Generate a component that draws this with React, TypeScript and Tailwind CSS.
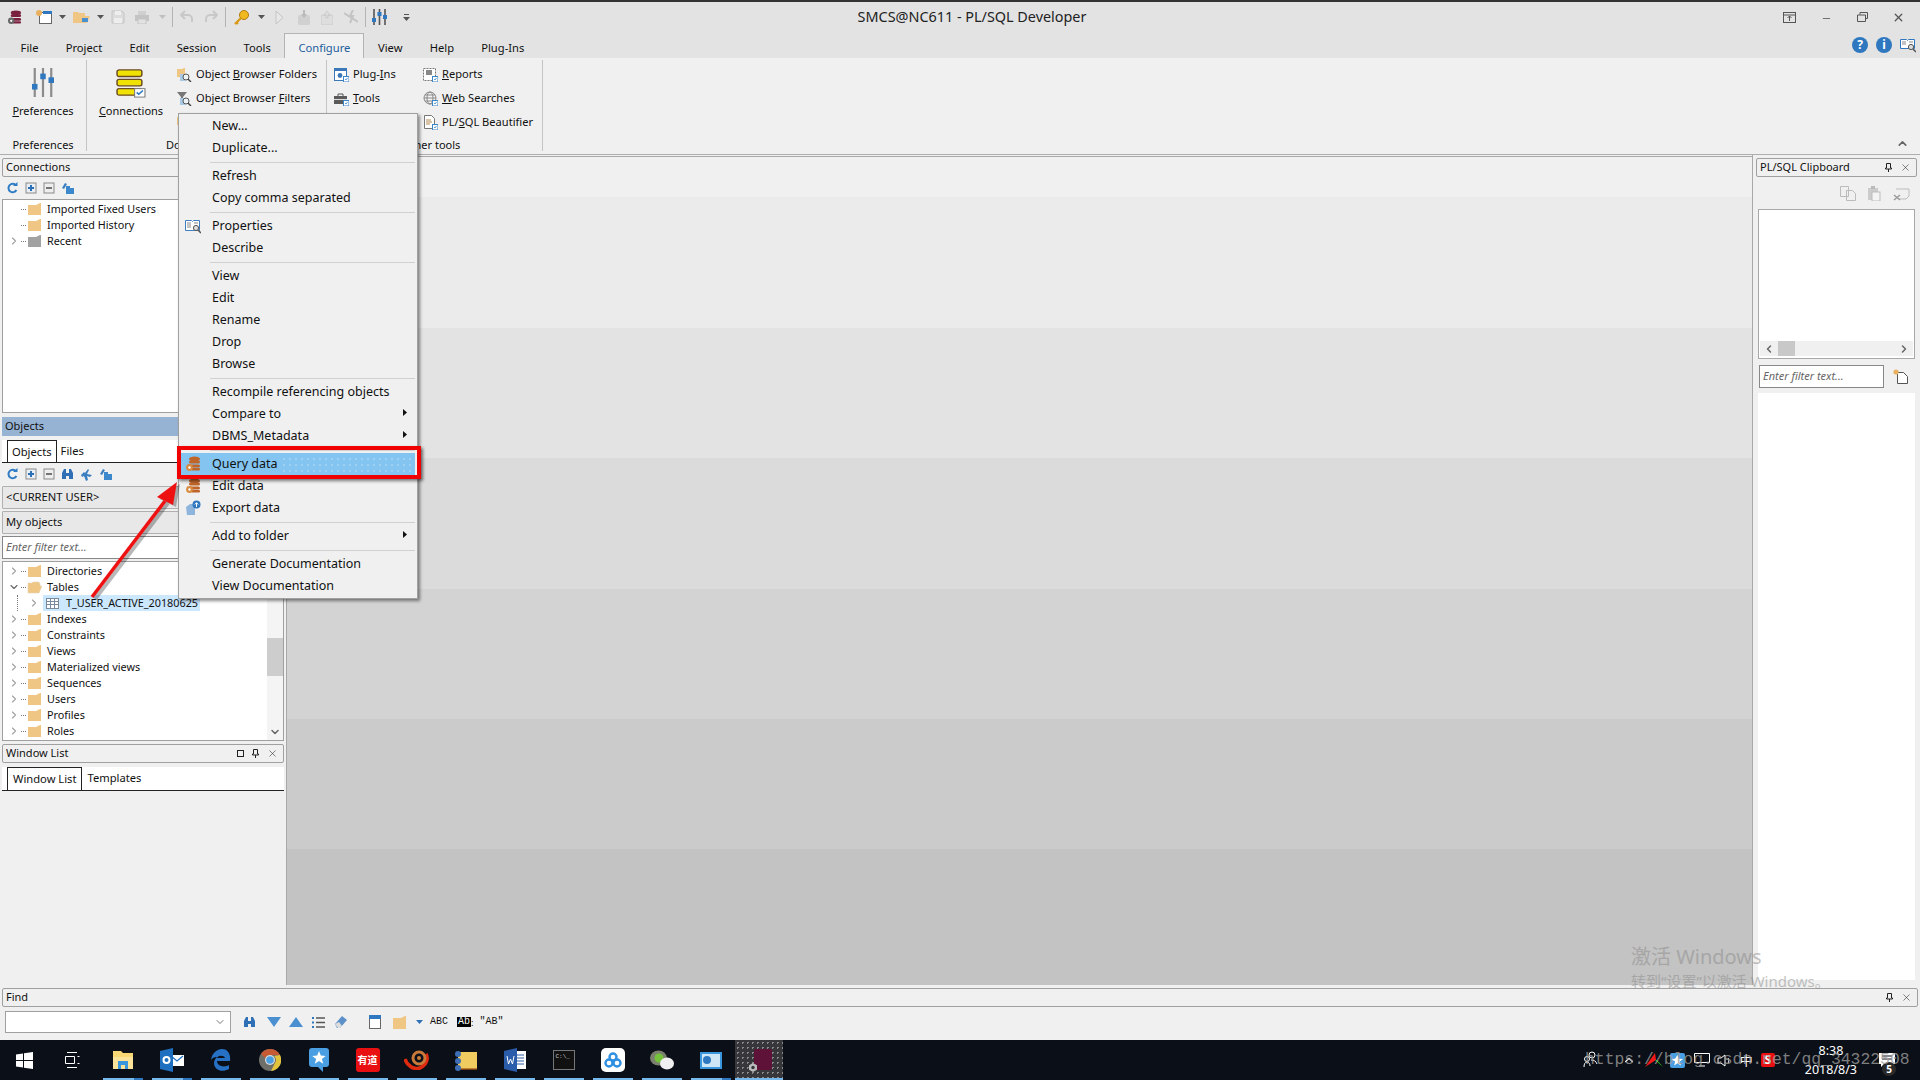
import React from "react";
import { ChevronDown, ChevronRight, ChevronUp, ChevronLeft, Minus, X } from "lucide-react";

const FONT = "font-['Noto_Sans','Noto_Sans_CJK_SC',sans-serif]";

const Folder = ({ color = "#efc683", open = false }: { color?: string; open?: boolean }) => (
  <svg width="15" height="14" viewBox="0 0 15 14" className="shrink-0">
    {open ? (
      <path d="M1 13V3h4l1-1h6l1 2v2h2l-3 7z" fill={color} stroke="#e3d3b8" strokeWidth="0.6" />
    ) : (
      <path d="M1 3h8l4-2h1v12H1z" fill={color} />
    )}
  </svg>
);

const Db = ({ c = "#7b1f3e", gear = "#666", size = 16 }: { c?: string; gear?: string; size?: number }) => (
  <svg width={size} height={size} viewBox="0 0 16 16" className="shrink-0">
    <ellipse cx="9.5" cy="3" rx="5.5" ry="2.5" fill={c} />
    <rect x="4" y="4.5" width="11" height="3" rx="1.5" fill={c} />
    <rect x="4" y="8.5" width="11" height="3" rx="1.5" fill={c} />
    <rect x="6" y="12" width="9" height="2.5" rx="1.2" fill={c} />
    <circle cx="4.5" cy="11.5" r="3.4" fill={gear} />
    <circle cx="4.5" cy="11.5" r="1.2" fill="#fff" />
  </svg>
);

const Caret = ({ c = "#555" }: { c?: string }) => (
  <svg width="7" height="4" viewBox="0 0 7 4" className="shrink-0">
    <path d="M0 0h7L3.5 4z" fill={c} />
  </svg>
);

const Arrowhead = () => (
  <svg width="4" height="7" viewBox="0 0 4 7" className="absolute right-[8px] top-[6px]">
    <path d="M0 0l4 3.5L0 7z" fill="#111" />
  </svg>
);

const Badge = () => (
  <>
    <rect x="9.5" y="9.5" width="5.5" height="5.5" fill="#fff" stroke="#3a86c8" />
    <path d="M11 12l1 1 1.5-2" fill="none" stroke="#3a86c8" strokeWidth="0.8" />
  </>
);

const SmallTools = ({ binoculars = false }: { binoculars?: boolean }) => (
  <div className="flex h-[22px] items-center gap-[6px] pl-[4px]">
    <svg width="12" height="12" viewBox="0 0 12 12" className="shrink-0">
      <path d="M10 3.5A4.2 4.2 0 1 0 10.4 8" fill="none" stroke="#2f7cc4" strokeWidth="2" />
      <path d="M7 4h4.5V0z" fill="#2f7cc4" />
    </svg>
    <svg width="12" height="12" viewBox="0 0 12 12" className="ml-[1px] shrink-0">
      <rect x="1" y="1" width="10" height="10" fill="#e9eef4" stroke="#8a8a8a" />
      <path d="M3 6h6M6 3v6" stroke="#2b6fb5" strokeWidth="2" />
    </svg>
    <svg width="12" height="12" viewBox="0 0 12 12" className="shrink-0">
      <rect x="1" y="1" width="10" height="10" fill="#eee" stroke="#8a8a8a" />
      <path d="M3 6h6" stroke="#555" strokeWidth="1.6" />
    </svg>
    {binoculars && (
      <>
        <svg width="13" height="12" viewBox="0 0 13 12" className="shrink-0">
          <path d="M1 11V5l2-4h2v10zM8 11V1h2l2 4v6zM5 5h3v3H5z" fill="#2f6fb5" />
        </svg>
        <svg width="13" height="13" viewBox="0 0 13 13" className="shrink-0">
          <path d="M1 7l3-3 1 1 3-4 1 1-2 4 5 1-2 2-3-1 1 4-2 1-2-5-2 1z" fill="#3c7fc0" />
        </svg>
      </>
    )}
    <svg width="13" height="12" viewBox="0 0 13 12" className="shrink-0">
      <path d="M1 6l3-5 2 1-3 5z" fill="#3c7fc0" />
      <rect x="5" y="6" width="8" height="6" fill="#3c88cc" />
      <rect x="5" y="4" width="4" height="2" fill="#3c88cc" />
    </svg>
  </div>
);

const PanelHeader = ({ title, buttons = 0, active = false }: { title: string; buttons?: number; active?: boolean }) => (
  <div
    className={`flex h-[19px] items-center pl-[3px] pr-[5px] text-[11px] ${
      active ? "bg-[#97b3d3]" : "rounded-[2px] border border-[#a0a0a0] bg-[#f0f0f0]"
    }`}
  >
    <span className="flex-1 truncate">{title}</span>
    {buttons >= 3 && <span className="mr-[8px] h-[7px] w-[7px] border border-[#222]" />}
    {buttons >= 2 && (
      <svg width="7" height="9" viewBox="0 0 7 9" className="mr-[8px] shrink-0">
        <path d="M1.5 .5h4v4.5h1v1h-6V5h1zM3.5 6v3" fill="none" stroke="#222" />
      </svg>
    )}
    {buttons >= 1 && <X size={11} strokeWidth={1.2} className="text-[#222]" />}
  </div>
);

const TreeRow = ({
  label,
  expanded,
  leaf,
  open,
  grey,
}: {
  label: string;
  expanded?: boolean;
  leaf?: boolean;
  open?: boolean;
  grey?: boolean;
}) => (
  <div className="flex h-[16px] items-center text-[10.8px] leading-[16px]">
    <span className="flex w-[18px] justify-center pl-[3px]">
      {!leaf &&
        (expanded ? (
          <ChevronDown size={12} strokeWidth={2.2} className="text-[#666]" />
        ) : (
          <ChevronRight size={12} strokeWidth={2.2} className="text-[#a0a0a0]" />
        ))}
    </span>
    <span className="mr-[1px] w-[5px] border-t border-dotted border-[#777]" />
    <Folder open={open} color={grey ? "#a2a2a2" : "#efc683"} />
    <span className="ml-[5px] whitespace-nowrap">{label}</span>
  </div>
);

const RibbonSmall = ({ icon, u }: { icon: React.ReactNode; u?: [string, string, string] }) => (
  <div className="flex h-[24px] items-center gap-[4px] whitespace-nowrap text-[11.1px]">
    <span className="flex w-[15px] shrink-0 justify-center">{icon}</span>
    {u && (
      <span>
        {u[0]}
        <span className="underline">{u[1]}</span>
        {u[2]}
      </span>
    )}
  </div>
);

const RibbonGlyph = ({ kind }: { kind: string }) => (
  <svg width="15" height="15" viewBox="0 0 15 15">
    {kind === "folders" && (
      <>
        <path d="M0 2h5l2-1h1v9H0z" fill="#efc683" />
        <rect x="3" y="7" width="5" height="7" fill="#a9c8e4" />
        <circle cx="9" cy="10" r="3" fill="#eef3f8" stroke="#555" />
        <path d="M11 12l3 3" stroke="#444" strokeWidth="1.5" />
      </>
    )}
    {kind === "filters" && (
      <>
        <path d="M0 1h10L6 6v5H4V6z" fill="#777" />
        <rect x="3" y="7" width="5" height="7" fill="#a9c8e4" />
        <circle cx="9" cy="10" r="3" fill="#eef3f8" stroke="#555" />
        <path d="M11 12l3 3" stroke="#444" strokeWidth="1.5" />
      </>
    )}
    {kind === "plugins" && (
      <>
        <rect x="0.5" y="1.5" width="12" height="12" fill="#fff" stroke="#3a78b8" />
        <rect x="0" y="1" width="13" height="3" fill="#3a78b8" />
        <circle cx="6" cy="8.5" r="2.4" fill="#3a78b8" />
        <Badge />
      </>
    )}
    {kind === "tools" && (
      <>
        <rect x="0" y="5" width="13" height="8" fill="#5a5a5a" />
        <path d="M4 5V3h5v2" fill="none" stroke="#555" />
        <rect x="0" y="8" width="13" height="1" fill="#ddd" />
        <Badge />
      </>
    )}
    {kind === "reports" && (
      <>
        <rect x="0.5" y="1.5" width="12" height="12" fill="#fff" stroke="#777" strokeDasharray="2 1" />
        <rect x="3" y="3" width="6" height="5" fill="#888" />
        <Badge />
      </>
    )}
    {kind === "web" && (
      <>
        <circle cx="7" cy="7" r="6" fill="#f4f4f4" stroke="#888" />
        <ellipse cx="7" cy="7" rx="3" ry="6" fill="none" stroke="#888" />
        <path d="M1 7h12M2 4h10M2 10h10" stroke="#888" />
        <Badge />
      </>
    )}
    {kind === "beautifier" && (
      <>
        <path d="M1.5.5h7l3 3v10h-10z" fill="#fff" stroke="#777" />
        <path d="M3 5h5M3 7h6M3 9h4" stroke="#b08a50" />
        <Badge />
      </>
    )}
  </svg>
);

const TitleBar = () => (
  <div className="flex h-[36px] items-center border-t-2 border-[#333] bg-[#e3e3e3] pb-[4px] pl-[7px]">
    <Db size={15} />
    <svg width="16" height="14" viewBox="0 0 16 14" className="ml-[14px]">
      <rect x="3.5" y="2.5" width="12" height="11" fill="#fff" stroke="#666" />
      <rect x="7" y="1" width="9" height="3" fill="#2f78c0" />
      <circle cx="3" cy="3" r="3" fill="#e9b060" />
    </svg>
    <span className="ml-[7px]"><Caret /></span>
    <svg width="17" height="14" viewBox="0 0 17 14" className="ml-[7px]">
      <path d="M0 13V2h5l1 1h6v3h5l-3 7z" fill="#efc683" />
      <rect x="9" y="8" width="6" height="4" fill="#4a90d0" />
    </svg>
    <span className="ml-[7px]"><Caret /></span>
    <svg width="14" height="14" viewBox="0 0 14 14" className="ml-[7px]">
      <path d="M1 1h10l2 2v10H1z" fill="#dcdcdc" stroke="#c4c4c4" />
      <rect x="4" y="1" width="6" height="4" fill="#eee" />
      <rect x="3" y="8" width="8" height="5" fill="#eee" />
    </svg>
    <svg width="14" height="13" viewBox="0 0 14 13" className="ml-[10px]">
      <rect x="3" y="0" width="8" height="4" fill="#d0d0d0" />
      <rect x="0" y="4" width="14" height="6" fill="#c4c4c4" />
      <rect x="3" y="8" width="8" height="5" fill="#e2e2e2" stroke="#c4c4c4" />
    </svg>
    <span className="ml-[10px]"><Caret c="#c0c0c0" /></span>
    <span className="ml-[6px] h-[20px] w-px bg-[#b4b4b4]" />
    <svg width="14" height="14" viewBox="0 0 14 14" className="ml-[7px]">
      <path d="M5 1L1 5l4 4M1 5h7a4 4 0 0 1 4 4v3" fill="none" stroke="#c8c8c8" strokeWidth="2" />
    </svg>
    <svg width="14" height="14" viewBox="0 0 14 14" className="ml-[10px]">
      <path d="M9 1l4 4-4 4M13 5H6a4 4 0 0 0-4 4v3" fill="none" stroke="#c8c8c8" strokeWidth="2" />
    </svg>
    <span className="ml-[7px] h-[20px] w-px bg-[#b4b4b4]" />
    <svg width="17" height="17" viewBox="0 0 17 17" className="ml-[7px]">
      <circle cx="11" cy="6" r="4.5" fill="#f2b91f" stroke="#b07a10" />
      <path d="M8 9l-6 6M3 13l2 2" stroke="#d89a18" strokeWidth="2.4" />
    </svg>
    <span className="ml-[8px]"><Caret /></span>
    <svg width="9" height="15" viewBox="0 0 9 15" className="ml-[10px]">
      <path d="M1 1l7 6.5L1 14z" fill="#e8e8e8" stroke="#c4c4c4" />
    </svg>
    <svg width="12" height="15" viewBox="0 0 12 15" className="ml-[14px]">
      <rect x="0" y="5" width="12" height="10" rx="2" fill="#d0d0d0" />
      <path d="M3 4l3 4 3-4H7V0H5v4z" fill="#bbb" />
    </svg>
    <svg width="12" height="15" viewBox="0 0 12 15" className="ml-[11px]">
      <rect x="0" y="5" width="12" height="10" rx="2" fill="#dedede" stroke="#ccc" />
      <path d="M3 5l3-4 3 4H7v3H5V5z" fill="#ddd" stroke="#bbb" strokeWidth="0.5" />
    </svg>
    <svg width="14" height="14" viewBox="0 0 14 14" className="ml-[11px]">
      <path d="M0 3l14 9M9 0L6 6h3l-3 7" fill="none" stroke="#c4c4c4" strokeWidth="2" />
    </svg>
    <span className="ml-[7px] h-[20px] w-px bg-[#b4b4b4]" />
    <svg width="15" height="16" viewBox="0 0 15 16" className="ml-[6px]">
      <path d="M2 0v16M7.5 0v16M13 0v16" stroke="#555" strokeWidth="1.6" />
      <rect x="0" y="9" width="4" height="4" fill="#2f78c0" />
      <rect x="5.5" y="3" width="4" height="4" fill="#2f78c0" />
      <rect x="11" y="6" width="4" height="4" fill="#2f78c0" />
    </svg>
    <span className="ml-[16px] flex flex-col items-center gap-[2px]">
      <span className="h-px w-[5px] bg-[#555]" />
      <Caret />
    </span>
    <div className="flex-1 pr-[249px] text-center text-[14.4px] text-[#222]">SMCS@NC611 - PL/SQL Developer</div>
    <div className="flex items-center pr-[15px]">
      <svg width="13" height="11" viewBox="0 0 13 11" className="mr-[25px]">
        <rect x=".5" y=".5" width="12" height="10" fill="none" stroke="#555" />
        <path d="M.5 3h12M6.5 9V4M4.5 6l2-2 2 2" fill="none" stroke="#555" />
      </svg>
      <Minus size={11} strokeWidth={2} className="mr-[25px] mt-[3px] text-[#666]" />
      <svg width="11" height="10" viewBox="0 0 11 10" className="mr-[24px]">
        <path d="M3 2.5V.5h7.5v6h-2M.5 3h8v6.5h-8z" fill="none" stroke="#555" />
      </svg>
      <X size={13} strokeWidth={2.4} className="text-[#555]" />
    </div>
  </div>
);

const MenuTabs = () => (
  <div className="flex h-[22px] items-end bg-[#e3e3e3] pl-[7px] text-[11.2px] text-[#111]">
    {["File", "Project", "Edit", "Session", "Tools"].map((t) => (
      <span key={t} className="flex h-[22px] items-center px-[13.6px] pt-[2px]">{t}</span>
    ))}
    <span className="relative -mb-px flex h-[26px] items-center border border-b-0 border-[#b4b4b4] bg-[#f0f0f0] px-[13px] pt-[4px] text-[#1d5d9c]">
      Configure
    </span>
    {["View", "Help", "Plug-Ins"].map((t) => (
      <span key={t} className="flex h-[22px] items-center px-[13.6px] pt-[2px]">{t}</span>
    ))}
    <div className="ml-auto flex items-center gap-[8px] self-start pr-[4px] pt-[1px]">
      <span className="flex h-[16px] w-[16px] items-center justify-center rounded-full bg-[#2f78c0] text-[12px] font-bold leading-none text-white">?</span>
      <span className="flex h-[16px] w-[16px] items-center justify-center rounded-full bg-[#2f78c0] text-[12px] font-bold leading-none text-white">i</span>
      <svg width="16" height="16" viewBox="0 0 16 16">
        <path d="M.5 2.5h6l1 1 1-1h6v9h-14z" fill="#fff" stroke="#2f78c0" />
        <path d="M2 5h4M2 7h4M9 5h4" stroke="#888" />
        <circle cx="11" cy="10" r="2.6" fill="#ddd" stroke="#555" />
        <path d="M13 12l3 3" stroke="#555" strokeWidth="1.5" />
      </svg>
    </div>
  </div>
);

const RibbonGroup = ({ width, labelClass, label, children }: { width: string; labelClass: string; label: string; children: React.ReactNode }) => (
  <div className={`flex ${width} flex-col border-r border-[#c4c4c4]`}>
    <div className="flex h-[78px] items-start">{children}</div>
    <div className={`whitespace-nowrap text-[11px] leading-[13px] ${labelClass}`}>{label}</div>
  </div>
);

const Ribbon = () => (
  <div className="relative flex h-[97px] items-start border-b border-[#aeaeae] bg-[#f0f0f0] pt-[2px] text-[#111]">
    <RibbonGroup width="w-[87px]" labelClass="text-center" label="Preferences">
      <div className="flex w-full flex-col items-center pt-[7px]">
        <svg width="22" height="31" viewBox="0 0 24 33" preserveAspectRatio="none">
          <path d="M3 1v31M12 1v31M21 1v31" stroke="#8c8c8c" strokeWidth="2.4" />
          <rect x="0" y="18" width="6" height="6" fill="#2f78c0" />
          <rect x="9" y="7" width="6" height="6" fill="#2f78c0" />
          <rect x="18" y="11" width="6" height="6" fill="#2f78c0" />
        </svg>
        <span className="mt-[5px] text-[11px]"><span className="underline">P</span>references</span>
      </div>
    </RibbonGroup>
    <RibbonGroup width="w-[240px]" labelClass="pl-[79px]" label="Do">
      <div className="flex w-[88px] flex-col items-center pt-[9px]">
        <svg width="30" height="29" viewBox="0 0 29 31" preserveAspectRatio="none">
          <rect x="1" y="1" width="24" height="7" rx="2" fill="#f1e206" stroke="#6a4a20" strokeWidth="1.4" />
          <rect x="1" y="11" width="24" height="7" rx="2" fill="#f1e206" stroke="#6a4a20" strokeWidth="1.4" />
          <rect x="1" y="21" width="24" height="7" rx="2" fill="#f1e206" stroke="#6a4a20" strokeWidth="1.4" />
          <rect x="18" y="21" width="10" height="9" fill="#fff" stroke="#777" />
          <path d="M20 25l2 2 4-4" fill="none" stroke="#2f78c0" strokeWidth="1.6" />
        </svg>
        <span className="mt-[5px] text-[11px]"><span className="underline">C</span>onnections</span>
      </div>
      <div className="flex flex-col pl-[2px] pt-[2px]">
        <RibbonSmall icon={<RibbonGlyph kind="folders" />} u={["Object ", "B", "rowser Folders"]} />
        <RibbonSmall icon={<RibbonGlyph kind="filters" />} u={["Object Browser ", "F", "ilters"]} />
        <RibbonSmall icon={<RibbonGlyph kind="folders" />} />
      </div>
    </RibbonGroup>
    <RibbonGroup width="w-[216px]" labelClass="pl-[75px]" label="Other tools">
      <div className="flex w-[96px] flex-col pl-[7px] pt-[2px]">
        <RibbonSmall icon={<RibbonGlyph kind="plugins" />} u={["Plug-", "I", "ns"]} />
        <RibbonSmall icon={<RibbonGlyph kind="tools" />} u={["", "T", "ools"]} />
      </div>
      <div className="flex flex-col pt-[2px]">
        <RibbonSmall icon={<RibbonGlyph kind="reports" />} u={["", "R", "eports"]} />
        <RibbonSmall icon={<RibbonGlyph kind="web" />} u={["", "W", "eb Searches"]} />
        <RibbonSmall icon={<RibbonGlyph kind="beautifier" />} u={["PL/", "S", "QL Beautifier"]} />
      </div>
    </RibbonGroup>
    <ChevronUp size={13} strokeWidth={3} className="absolute bottom-[4px] right-[11px] text-[#666]" />
  </div>
);

const LeftPanel = () => (
  <div className="flex w-[286px] shrink-0 flex-col px-[2px] pt-[3px] text-[#111]">
    <PanelHeader title="Connections" />
    <SmallTools />
    <div className="h-[214px] border border-[#a0a0a0] bg-white pt-px">
      <TreeRow label="Imported Fixed Users" leaf />
      <TreeRow label="Imported History" leaf />
      <TreeRow label="Recent" grey />
    </div>
    <div className="mt-[4px]">
      <PanelHeader title="Objects" active />
    </div>
    <div className="mt-[4px] flex h-[23px] items-end border-b border-[#222] bg-white pl-[5px] text-[11.2px]">
      <span className="flex h-[22px] items-center border border-b-0 border-[#222] bg-white px-[4px] pt-px">Objects</span>
      <span className="flex h-[22px] items-center px-[4px] pt-px">Files</span>
    </div>
    <div className="mb-[1px]">
      <SmallTools binoculars />
    </div>
    <div className="flex h-[23px] items-center rounded-[1px] border border-[#b0b0b0] bg-[#e8e8e8] pl-[3px] text-[11.2px]">&lt;CURRENT USER&gt;</div>
    <div className="mt-[2px] flex h-[23px] items-center rounded-[1px] border border-[#b0b0b0] bg-[#e8e8e8] pl-[3px] text-[11.2px]">My objects</div>
    <div className="mt-[2px] flex h-[23px] items-center border border-[#888] bg-white pl-[3px] text-[11px] italic text-[#666]">Enter filter text...</div>
    <div className="relative mt-[2px] h-[180px] border border-[#a0a0a0] bg-white pt-[1px]">
      <TreeRow label="Directories" />
      <TreeRow label="Tables" expanded open />
      <div className="flex h-[16px] items-center text-[10.8px]">
        <span className="ml-[14px] h-[16px] border-l border-dotted border-[#777]" />
        <ChevronRight size={12} strokeWidth={2.2} className="ml-[10px] text-[#a0a0a0]" />
        <div className="ml-[3px] flex h-[16px] w-[157px] shrink-0 items-center bg-[#cce8ff] pl-[3px]">
          <svg width="13" height="11" viewBox="0 0 13 11" className="shrink-0">
            <rect x=".5" y=".5" width="12" height="10" fill="#fff" stroke="#7a8a9a" />
            <path d="M.5 3.5h12M.5 6.5h12M4.5 .5v10M8.5 .5v10" stroke="#7a8a9a" />
          </svg>
          <span className="ml-[7px] whitespace-nowrap">T_USER_ACTIVE_20180625</span>
        </div>
      </div>
      {["Indexes", "Constraints", "Views", "Materialized views", "Sequences", "Users", "Profiles", "Roles"].map((t) => (
        <TreeRow key={t} label={t} />
      ))}
      <div className="absolute bottom-0 right-0 top-0 flex w-[16px] flex-col items-center bg-[#f4f4f4]">
        <div className="mt-[76px] h-[38px] w-full bg-[#cdcdcd]" />
        <ChevronDown size={12} strokeWidth={3} className="mb-[2px] mt-auto text-[#666]" />
      </div>
    </div>
    <div className="mt-[3px]">
      <PanelHeader title="Window List" buttons={3} />
    </div>
    <div className="mt-[4px] flex h-[24px] items-end border-b border-[#222] bg-white pl-[5px] text-[11.2px]">
      <span className="flex h-[23px] items-center border border-b-0 border-[#222] bg-white px-[5px]">Window List</span>
      <span className="flex h-[23px] items-center px-[5px]">Templates</span>
    </div>
  </div>
);

const bands = ["#f0f0f0", "#ebebeb", "#e3e3e3", "#dbdbdb", "#d3d3d3", "#cbcbcb", "#c3c3c3"];
const bandHeights = ["h-[40px]", "h-[131px]", "h-[130px]", "h-[131px]", "h-[130px]", "h-[130px]", "flex-1"];

const MainArea = () => (
  <div className="mt-px flex flex-1 flex-col border-l border-t border-[#a8a8a8]">
    {bands.map((b, i) => (
      <div key={b} className={bandHeights[i]} style={{ backgroundColor: b }} />
    ))}
  </div>
);

const RightPanel = () => (
  <div className="flex w-[168px] shrink-0 flex-col border-l border-[#a8a8a8] px-[3px] pt-[3px] text-[#111]">
    <PanelHeader title="PL/SQL Clipboard" buttons={2} />
    <div className="flex h-[32px] items-center justify-end gap-[12px] pr-[7px]">
      <svg width="16" height="15" viewBox="0 0 16 15">
        <path d="M.5.5h8v10h-8zM6.5 4.5h6l3 3v7h-9z" fill="#f0f0f0" stroke="#bbb" />
      </svg>
      <svg width="13" height="15" viewBox="0 0 13 15">
        <rect x="0" y="2" width="10" height="12" fill="#ccc" />
        <rect x="3" y="0" width="4" height="3" fill="#bbb" />
        <rect x="4" y="6" width="8" height="9" fill="#f4f4f4" stroke="#bbb" />
      </svg>
      <svg width="17" height="15" viewBox="0 0 17 15">
        <path d="M3 3h13v7l-3 3H6" fill="none" stroke="#bbb" />
        <path d="M1 9l6 5M7 9l-6 5" stroke="#999" strokeWidth="1.4" />
      </svg>
    </div>
    <div className="mx-[2px] flex h-[150px] flex-col border border-[#a8a8a8] bg-white">
      <div className="mx-[1px] mb-[2px] mt-auto flex h-[15px] items-center bg-[#f0f0f0]">
        <ChevronLeft size={12} strokeWidth={3} className="ml-[3px] text-[#666]" />
        <span className="ml-[3px] h-[15px] w-[17px] bg-[#c8c8c8]" />
        <ChevronRight size={12} strokeWidth={3} className="ml-auto mr-[3px] text-[#666]" />
      </div>
    </div>
    <div className="mx-[3px] mt-[6px] flex items-center">
      <div className="flex h-[23px] w-[125px] items-center border border-[#888] bg-white pl-[3px] text-[11px] italic text-[#666]">Enter filter text...</div>
      <svg width="15" height="15" viewBox="0 0 15 15" className="ml-[9px]">
        <path d="M4.5 3.5h6l4 4v7h-10z" fill="#fff" stroke="#555" />
        <circle cx="3" cy="3" r="2.6" fill="#e9b060" />
      </svg>
    </div>
    <div className="mx-[2px] mb-[5px] mt-[5px] flex-1 bg-white" />
  </div>
);

const FindPanel = () => (
  <div className="h-[55px] bg-[#f0f0f0] px-[2px] pt-[3px] text-[#111]">
    <PanelHeader title="Find" buttons={2} />
    <div className="mt-[4px] flex items-center pl-[3px]">
      <div className="flex h-[22px] w-[226px] items-center justify-end border border-[#a0a0a0] bg-white pr-[4px]">
        <ChevronDown size={12} className="text-[#777]" />
      </div>
      <svg width="13" height="12" viewBox="0 0 13 12" className="ml-[12px]">
        <path d="M1 11V5l2-4h2v10zM8 11V1h2l2 4v6zM5 5h3v3H5z" fill="#2f6fb5" />
      </svg>
      <svg width="14" height="10" viewBox="0 0 14 10" className="ml-[11px]">
        <path d="M0 0h14L7 10z" fill="#4a90d0" />
      </svg>
      <svg width="14" height="10" viewBox="0 0 14 10" className="ml-[8px]">
        <path d="M0 10h14L7 0z" fill="#4a90d0" />
      </svg>
      <svg width="13" height="13" viewBox="0 0 13 13" className="ml-[9px]">
        <path d="M4 2h9M4 6.5h9M4 11h9" stroke="#555" strokeWidth="1.3" />
        <path d="M0 1h2v2H0zM0 5.5h2v2H0zM0 10h2v2H0z" fill="#2f78c0" />
      </svg>
      <svg width="14" height="14" viewBox="0 0 14 14" className="ml-[9px]">
        <path d="M1 9l7-8 5 4-7 8H3z" fill="#5b90c8" />
        <path d="M1 9l3 4h2l2-2-3-4z" fill="#ddd" />
      </svg>
      <svg width="12" height="14" viewBox="0 0 12 14" className="ml-[21px]">
        <rect x=".5" y=".5" width="11" height="13" fill="#fff" stroke="#666" />
        <rect x="0" y="0" width="12" height="4" fill="#2f78c0" />
      </svg>
      <svg width="15" height="15" viewBox="0 0 15 15" className="ml-[11px]">
        <path d="M1 3h8l4-2h1v13H1z" fill="#efc683" />
      </svg>
      <span className="ml-[9px]"><Caret c="#2f6fb5" /></span>
      <span className="ml-[7px] font-['Liberation_Mono',monospace] text-[10px] leading-none">ABC</span>
      <span className="ml-[9px] bg-black px-px font-['Liberation_Mono',monospace] text-[10px] leading-none text-white">Ab</span>
      <span className="text-[9px] leading-none">:</span>
      <span className="ml-[6px] font-['Liberation_Mono',monospace] text-[10px] leading-none">"AB"</span>
    </div>
  </div>
);

const TaskIcon = ({ children, running = true, multi = false, active = false }: { children: React.ReactNode; running?: boolean; multi?: boolean; active?: boolean }) => (
  <div className="relative flex h-[40px] w-[49px] shrink-0 items-center justify-center">
    {active && <span className="absolute inset-y-0 left-0 w-[48px] bg-[#37373b] bg-[radial-gradient(#8a8a8a_1px,transparent_1px)] bg-[length:5px_5px]" />}
    <span className="relative flex items-center justify-center">{children}</span>
    {running && <span className={`absolute bottom-0 h-[2px] bg-[#76b9ed] ${active ? "left-0 w-[48px]" : "left-[5px] w-[40px]"}`} />}
    {multi && <span className="absolute bottom-0 left-[36px] h-[2px] w-[9px] bg-[#2f78c0]" />}
  </div>
);

const Taskbar = () => (
  <div className="relative flex h-[40px] items-center bg-[#0b0f17] text-white">
    <TaskIcon running={false}>
      <svg width="17" height="17" viewBox="0 0 17 17">
        <path d="M0 2.5l7-1v6.5H0zM8 1.3l9-1.3v8H8zM0 9h7v6.5l-7-1zM8 9h9v8l-9-1.3z" fill="#fff" />
      </svg>
    </TaskIcon>
    <TaskIcon running={false}>
      <svg width="16" height="16" viewBox="0 0 16 16" fill="none" stroke="#fff" className="-ml-[4px]">
        <path d="M3 .5h10M3 15.5h10M1.5 4.5h9v7h-9zM13.5 4.5h2M13.5 11.5h2" />
      </svg>
    </TaskIcon>
    <TaskIcon multi>
      <svg width="22" height="20" viewBox="0 0 22 20">
        <path d="M1 1h8l2 2h10v16H1z" fill="#f8d775" />
        <path d="M1 7h20v12H1z" fill="#fbe49a" />
        <path d="M6 19v-8h10v8h-3v-4H9v4z" fill="#3a96dd" />
      </svg>
    </TaskIcon>
    <TaskIcon multi>
      <svg width="24" height="24" viewBox="0 0 24 24">
        <rect x="10" y="7" width="14" height="11" fill="#fff" />
        <path d="M11 8l6 5 6-5" fill="none" stroke="#1f6fc0" strokeWidth="1.2" />
        <path d="M0 3l13-3v24L0 21z" fill="#1f6fc0" />
        <circle cx="6.5" cy="12" r="3" fill="none" stroke="#fff" strokeWidth="2" />
      </svg>
    </TaskIcon>
    <TaskIcon>
      <svg width="21" height="22" viewBox="0 0 21 22">
        <path d="M1 11C2 4 7 0 12 0c5 0 9 4 8 12H7c0 5 7 7 12 4v4c-7 4-15 1-15-6 0-2 1-4 3-6-3 0-5 1-6 3z" fill="#2671c4" />
        <path d="M7 9c1-3 7-3 8 0z" fill="#0b0f17" />
      </svg>
    </TaskIcon>
    <TaskIcon>
      <svg width="22" height="22" viewBox="0 0 22 22">
        <circle cx="11" cy="11" r="11" fill="#6f6f6a" />
        <path d="M2 5a11 11 0 0 1 19 1H11a5 5 0 0 0-5 3z" fill="#c65a34" />
        <path d="M21 6a11 11 0 0 1-9 16l4-8a5 5 0 0 0-1-7z" fill="#e3c23c" />
        <circle cx="11" cy="11" r="5" fill="#ddd" />
        <circle cx="11" cy="11" r="3.8" fill="#4a9fe3" />
      </svg>
    </TaskIcon>
    <TaskIcon>
      <svg width="20" height="24" viewBox="0 0 20 24">
        <path d="M3 0h14a3 3 0 0 1 3 3v13a3 3 0 0 1-3 3h-3v5l-5-5H3a3 3 0 0 1-3-3V3a3 3 0 0 1 3-3z" fill="#4a9fe3" />
        <path d="M10 3l1.8 4.6 4.9.3-3.8 3.1 1.3 4.8L10 13.100l-4.200 2.700 1.300-4.800-3.800-3.100 4.900-.3z" fill="#fff" />
      </svg>
    </TaskIcon>
    <TaskIcon>
      <div className="flex h-[24px] w-[24px] items-center justify-center rounded-[3px] bg-[#e81010] text-[10px] font-bold leading-none text-white">有道</div>
    </TaskIcon>
    <TaskIcon>
      <svg width="26" height="20" viewBox="0 0 26 20">
        <path d="M1 9c2 7 9 11 15 9 6-3 9-9 6-14" fill="none" stroke="#e02a10" strokeWidth="3.5" />
        <circle cx="15" cy="8" r="6" fill="none" stroke="#c97a3a" strokeWidth="3" />
        <circle cx="15" cy="8" r="2" fill="#c97a3a" />
      </svg>
    </TaskIcon>
    <TaskIcon>
      <svg width="23" height="23" viewBox="0 0 23 23">
        <rect x="4" y="3" width="19" height="17" fill="#f0cc60" />
        <path d="M4 20h19" stroke="#a85a1a" strokeWidth="1.4" />
        <circle cx="4" cy="5" r="3" fill="#3c6fb5" />
        <circle cx="4" cy="12" r="3" fill="#3c6fb5" />
        <circle cx="4" cy="19" r="3" fill="#3c6fb5" />
      </svg>
    </TaskIcon>
    <TaskIcon>
      <svg width="22" height="24" viewBox="0 0 22 24">
        <rect x="8" y="3" width="14" height="18" fill="#fff" />
        <path d="M12 7h8M12 10h8M12 13h8M12 16h8" stroke="#2f5fa8" />
        <path d="M0 3l13-3v24L0 21z" fill="#2a5caa" />
        <path d="M3 8l1.500 8 2-5 2 5L10 8" fill="none" stroke="#fff" />
      </svg>
    </TaskIcon>
    <TaskIcon>
      <div className="flex h-[20px] w-[22px] items-start border border-[#777] bg-[#111] pl-[2px] pt-[3px] font-['Liberation_Mono',monospace] text-[6px] leading-none text-[#ccc]">C:\_</div>
    </TaskIcon>
    <TaskIcon>
      <div className="flex h-[24px] w-[24px] items-center justify-center rounded-[5px] bg-white">
        <svg width="18" height="16" viewBox="0 0 18 16" fill="none" stroke="#2f8fe0" strokeWidth="2.4">
          <circle cx="9" cy="5" r="3.5" />
          <circle cx="5" cy="11" r="3.5" />
          <circle cx="13" cy="11" r="3.5" />
        </svg>
      </div>
    </TaskIcon>
    <TaskIcon>
      <svg width="24" height="20" viewBox="0 0 24 20">
        <ellipse cx="8.500" cy="8" rx="8.500" ry="7.500" fill="#7b7f6e" />
        <circle cx="9" cy="8" r="4.500" fill="#74c23a" />
        <ellipse cx="17" cy="13.500" rx="7" ry="6" fill="#f0f0f0" />
      </svg>
    </TaskIcon>
    <TaskIcon multi>
      <svg width="22" height="17" viewBox="0 0 22 17">
        <rect x="0" y="0" width="22" height="17" fill="#3a96dd" />
        <rect x="2" y="2" width="18" height="13" fill="#cfe6f7" />
        <circle cx="7" cy="8" r="4" fill="#2f78c0" />
      </svg>
    </TaskIcon>
    <TaskIcon active>
      <svg width="24" height="24" viewBox="0 0 24 24" className="mt-[2px]">
        <rect x="6" y="0" width="18" height="21" rx="2" fill="#5e1238" />
        <path d="M5 14l4 2.200v4.600L5 23l-4-2.200v-4.600z" fill="#bbb" />
        <circle cx="5" cy="18.500" r="1.700" fill="#37373b" />
      </svg>
    </TaskIcon>
    <div className="flex-1" />
    <div className="flex h-[40px] items-center pr-[25px]">
      <svg width="15" height="18" viewBox="0 0 15 18" fill="none" stroke="#fff" className="mr-[24px]">
        <circle cx="9" cy="4" r="3" />
        <circle cx="4" cy="8" r="2.500" />
        <path d="M1 16c0-3 1-5 3-5s3 2 3 4M8 9c3 0 5 1 6 4" />
      </svg>
      <ChevronUp size={14} className="mr-[9px]" />
      <svg width="18" height="14" viewBox="0 0 18 14" className="mr-[7px]">
        <path d="M0 14L10 0l1 7z" fill="#f01818" />
        <path d="M10 7l2 0 6 7z" fill="#18d018" />
      </svg>
      <svg width="15" height="15" viewBox="0 0 15 15" className="mr-[9px]">
        <rect width="15" height="15" rx="2" fill="#4a9fe3" />
        <path d="M7.500 2l1.500 3.800 4 .2-3.100 2.600 1 3.900-3.400-2.200-3.400 2.200 1-3.900L1 6l4-.2z" fill="#fff" />
      </svg>
      <svg width="16" height="14" viewBox="0 0 16 14" fill="none" stroke="#fff" className="mr-[7px]">
        <path d="M.5 .5h15v9H.5zM5 13h6" />
      </svg>
      <svg width="15" height="13" viewBox="0 0 15 13" fill="none" stroke="#fff" className="mr-[8px]">
        <path d="M1 4h3l4-3v11L4 9H1zM11 4c1 1 1 4 0 5" />
      </svg>
      <span className="mr-[8px] text-[13px] leading-none">中</span>
      <div className="mr-[30px] flex h-[14px] w-[14px] items-center justify-center rounded-[2px] bg-[#e81010] text-[12px] font-bold leading-none">S</div>
      <div className="mr-[22px] flex flex-col items-center text-[12.500px] leading-[19px]">
        <span>8:38</span>
        <span>2018/8/3</span>
      </div>
      <div className="relative">
        <svg width="16" height="14" viewBox="0 0 16 14">
          <path d="M0 0h16v11H5l-3 3v-3H0z" fill="#fff" />
          <path d="M3 3h10M3 6h10" stroke="#0b0f17" />
        </svg>
        <span className="absolute -bottom-[9px] left-[3px] flex h-[14px] w-[14px] items-center justify-center rounded-full bg-[#2a2a2a] text-[10px] font-bold leading-none">5</span>
      </div>
    </div>
    <div className="pointer-events-none absolute left-[1585px] top-[12px] whitespace-nowrap font-['Liberation_Mono',monospace] text-[16.400px] leading-none text-[#9a9a9a] opacity-80">
      https://blog.csdn.net/qq_34322508
    </div>
  </div>
);

type MenuEntry = { label?: string; arrow?: boolean; icon?: React.ReactNode; hot?: boolean };

const menuItems: MenuEntry[] = [
  { label: "New..." },
  { label: "Duplicate..." },
  {},
  { label: "Refresh" },
  { label: "Copy comma separated" },
  {},
  {
    label: "Properties",
    icon: (
      <svg width="16" height="15" viewBox="0 0 16 15">
        <path d="M.5 1.500h6l1 1 1-1h6v10h-14z" fill="#fff" stroke="#3f7fbf" />
        <path d="M2 4h4M2 6h4M2 8h4M9 4h4" stroke="#888" />
        <circle cx="11" cy="9" r="2.600" fill="#ddd" stroke="#555" />
        <path d="M13 11l3 3" stroke="#555" strokeWidth="1.500" />
      </svg>
    ),
  },
  { label: "Describe" },
  {},
  { label: "View" },
  { label: "Edit" },
  { label: "Rename" },
  { label: "Drop" },
  { label: "Browse" },
  {},
  { label: "Recompile referencing objects" },
  { label: "Compare to", arrow: true },
  { label: "DBMS_Metadata", arrow: true },
  {},
  { label: "Query data", hot: true, icon: <Db c="#c0652a" gear="#d88a40" /> },
  { label: "Edit data", icon: <Db c="#c0652a" gear="#d88a40" /> },
  {
    label: "Export data",
    icon: (
      <svg width="16" height="16" viewBox="0 0 16 16">
        <path d="M1 7l4-3h5v11H2z" fill="#8fb5dc" />
        <circle cx="11.500" cy="4.500" r="4" fill="#2f78c0" />
        <path d="M11.500 7V3M9.800 4.500l1.700-1.800 1.700 1.800" fill="none" stroke="#fff" />
      </svg>
    ),
  },
  {},
  { label: "Add to folder", arrow: true },
  {},
  { label: "Generate Documentation" },
  { label: "View Documentation" },
];

const ContextMenu = () => (
  <div className="absolute left-[178px] top-[113px] w-[240px] border border-[#a0a0a0] bg-[#f0f0f0] py-px text-[12.500px] text-[#111] shadow-[2px_2px_3px_rgba(0,0,0,0.45)]">
    {menuItems.map((m, i) =>
      m.label ? (
        <div key={i} className={`relative mx-[2px] flex h-[22px] items-center ${m.hot ? "bg-[#84c4f0]" : ""}`}>
          <span className="flex w-[22px] justify-center pl-[2px]">{m.icon}</span>
          <span className="ml-[9px] whitespace-nowrap">{m.label}</span>
          {m.hot && <span className="absolute inset-y-[3px] left-[100px] right-[3px] bg-[radial-gradient(#ffffff33_1px,transparent_1px)] bg-[length:6px_6px]" />}
          {m.arrow && <Arrowhead />}
        </div>
      ) : (
        <div key={i} className="ml-[31px] mr-[2px] flex h-[6px] items-center">
          <span className="h-px w-full bg-[#d0d0d0]" />
        </div>
      )
    )}
  </div>
);

const Annotation = () => (
  <>
    <div className="absolute left-[177px] top-[446px] h-[33px] w-[244px] border-4 border-[#f00000] shadow-[2px_2px_3px_rgba(0,0,0,0.5)]" />
    <svg width="100" height="125" viewBox="0 0 100 125" className="absolute left-[85px] top-[478px]">
      <path d="M7 119L80 23" stroke="#000" strokeOpacity="0.28" strokeWidth="4" transform="translate(3 2)" />
      <path d="M92 4L72 19l16 8z" fill="#000" fillOpacity="0.28" transform="translate(3 2)" />
      <path d="M7 119L80 23" stroke="#ee1111" strokeWidth="3.500" />
      <path d="M92 4L72 19l16 8z" fill="#ee1111" />
    </svg>
  </>
);

const Watermark = () => (
  <div className="pointer-events-none absolute left-[1631px] top-[943px] whitespace-nowrap text-[#8a8a8a] opacity-50">
    <div className="text-[20px] leading-[28px]">激活 Windows</div>
    <div className="text-[15px] leading-[20px]">转到“设置”以激活 Windows。</div>
  </div>
);

export default function App() {
  return (
    <div className={`relative flex h-[1080px] w-[1920px] flex-col overflow-hidden bg-[#f0f0f0] ${FONT}`}>
      <TitleBar />
      <MenuTabs />
      <Ribbon />
      <div className="flex min-h-0 flex-1">
        <LeftPanel />
        <MainArea />
        <RightPanel />
      </div>
      <FindPanel />
      <Taskbar />
      <ContextMenu />
      <Annotation />
      <Watermark />
    </div>
  );
}
